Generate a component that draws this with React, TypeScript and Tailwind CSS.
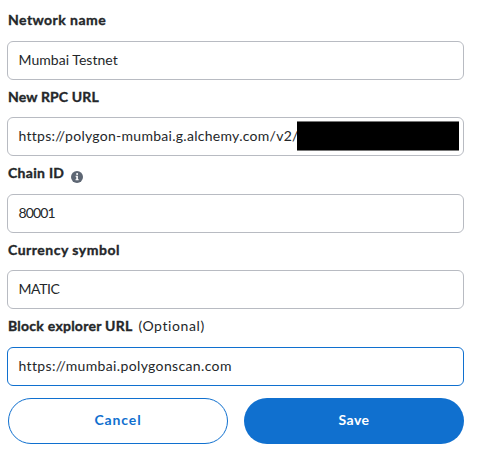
import type { ReactNode } from "react";

function Field({ label, labelClass, value, valueClass, extra, focused, redacted, className }: {
  label: string;
  labelClass: string;
  value: string;
  valueClass: string;
  extra?: ReactNode;
  focused?: boolean;
  redacted?: boolean;
  className: string;
}) {
  return (
    <div className={`flex flex-col justify-between ${className}`}>
      <div className="flex h-5 items-center whitespace-nowrap">
        <span className={`font-bold [-webkit-text-stroke:0.35px_#24272a] ${labelClass}`}>{label}</span>
        {extra}
      </div>
      <div
        className={`flex h-[39px] items-center justify-between rounded-[6px] border pl-[10.5px] pr-[4px] ${
          focused ? "border-[#1070cf]" : "border-[#b8bbc2]"
        }`}
      >
        <span className={`min-w-0 whitespace-nowrap pb-[2px] ${valueClass}`}>{value}</span>
        {redacted && <span className="-mt-px h-[30px] w-[162px] shrink-0 border-y border-[#777] bg-black" />}
      </div>
    </div>
  );
}

function InfoIcon() {
  return (
    <svg className="mt-[7px] ml-[6.5px]" width="12" height="12" viewBox="0 0 12 12">
      <circle cx="6" cy="6" r="6" fill="#5d6673" />
      <circle cx="6.1" cy="3" r="1" fill="#fff" />
      <path d="M4.6 4.8h2.3v3.4h.8v1H4.5v-1h.8V5.8h-.7z" fill="#fff" />
    </svg>
  );
}

export default function App() {
  return (
    <main className="h-[471px] w-[487px] overflow-hidden bg-white pl-[7px] pr-[23px] pt-[10px] font-['Lato',sans-serif] text-[14px] leading-5 text-[#24272a]">
      <Field className="h-[70px]" label="Network name" labelClass="pl-px tracking-[0.45px]" value="Mumbai Testnet" valueClass="tracking-[0.04px]" />
      <Field className="mt-[7px] h-[69px]" label="New RPC URL" labelClass="pl-px tracking-[0.15px]" value="https://polygon-mumbai.g.alchemy.com/v2/" valueClass="tracking-[0.28px]" redacted />
      <Field className="mt-[7px] h-[70px]" label="Chain ID" labelClass="pl-px tracking-[0.3px]" value="80001" valueClass="tracking-[-0.9px]" extra={<InfoIcon />} />
      <Field className="mt-[7px] h-[69px]" label="Currency symbol" labelClass="pl-px tracking-[0.5px]" value="MATIC" valueClass="tracking-[-0.4px]" />
      <Field
        className="mt-[7px] h-[70px]"
        label="Block explorer URL"
        labelClass="pl-px tracking-[0.25px]"
        value="https://mumbai.polygonscan.com"
        valueClass="tracking-[0.36px]"
        extra={<span className="ml-[6px] tracking-[0.6px]">(Optional)</span>}
        focused
      />
      <div className="mt-3 flex gap-4 pl-px font-bold">
        <button className="h-[46px] w-[220px] rounded-full border border-[#1070cf] pb-[3px] text-[#1070cf] tracking-[0.9px]">Cancel</button>
        <button className="h-[46px] w-[220px] rounded-full bg-[#1070cf] pb-[3px] text-white tracking-[0.5px]">Save</button>
      </div>
    </main>
  );
}
